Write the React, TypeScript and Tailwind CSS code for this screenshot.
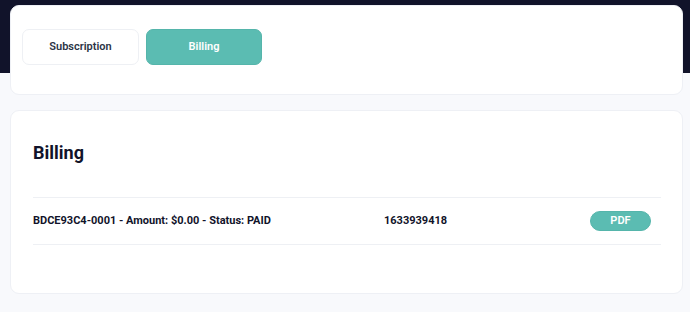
import React from 'react';

interface Invoice {
  label: string;
  number: string;
}

const invoices: Invoice[] = [
  { label: 'BDCE93C4-0001 - Amount: $0.00 - Status: PAID', number: '1633939418' },
];

const App: React.FC = () => {
  return (
    <div className="w-[690px] h-[312px] bg-[#f8f9fc] overflow-hidden font-['Roboto',sans-serif]">
      <div className="h-[73px] bg-[#11132a]" />
      <div className="-mt-[68px] pl-[10px] pr-[7px] flex flex-col gap-[15px]">
        {/* tabs */}
        <div className="h-[90px] bg-white rounded-[9px] border border-[#eef0f5] px-[11px] pt-[23px] flex items-start gap-[7px]">
          <button className="w-[117px] h-[36px] rounded-[7px] border border-[#eef0f4] bg-white text-[11px] font-semibold text-[#2b3445]">
            Subscription
          </button>
          <button className="w-[116px] h-[36px] rounded-[7px] bg-[#5bbcb2] border border-[#55b5ab] text-[11px] font-semibold text-white">
            Billing
          </button>
        </div>

        {/* billing list */}
        <div className="h-[184px] bg-white rounded-[9px] border border-[#eef0f5] pl-[22px] pr-[21px] pt-[30px]">
          <h2 className="text-[18px] leading-[24px] font-bold text-[#11132a]">Billing</h2>
          <div className="mt-[32px] border-t border-[#eef0f4]">
            {invoices.map((inv, i) => (
              <div key={i} className="h-[47px] flex items-center border-b border-[#eef0f4]">
                <div className="w-[351px] text-[11px] font-bold text-[#11132a]">{inv.label}</div>
                <div className="flex-1 text-[11px] font-bold text-[#11132a]">{inv.number}</div>
                <button className="mr-[10px] w-[61px] h-[20px] rounded-full bg-[#5bbcb2] border border-[#55b5ab] text-[11px] font-semibold text-white">
                  PDF
                </button>
              </div>
            ))}
          </div>
        </div>
      </div>
    </div>
  );
};

export default App;
